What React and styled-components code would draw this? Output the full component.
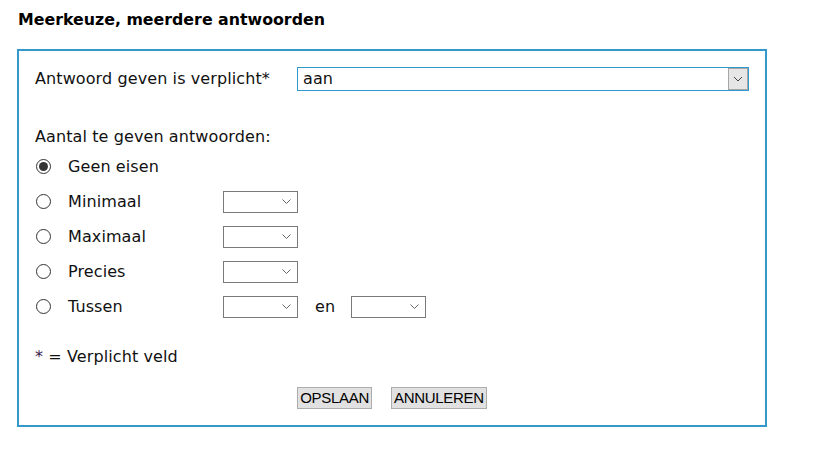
import React from "react";
import styled, { createGlobalStyle } from "styled-components";

const Global = createGlobalStyle`
  html, body { margin: 0; padding: 0; background: #fff; }
  body { font-family: "DejaVu Sans", Verdana, sans-serif; color: #111; }
`;

const Page = styled.div`
  padding: 11px 0 0 17px;
  width: 750px;
`;

const Title = styled.h2`
  margin: 0 0 0 1px;
  font-size: 15.8px;
  font-weight: bold;
  line-height: 18px;
  color: #000;
`;

const Panel = styled.div`
  margin-top: 20px;
  box-sizing: border-box;
  width: 750px;
  height: 378px;
  border: 2px solid #3399cc;
  padding: 16px 16px 0 16px;
  display: flex;
  flex-direction: column;
`;

const TopRow = styled.div`
  display: flex;
  align-items: center;
  height: 24px;
`;

const Text = styled.span`
  font-size: 16px;
  letter-spacing: 0.1px;
  line-height: 18px;
`;

const Label = styled(Text)`
  width: ${(p) => p.$w || "auto"};
  flex: none;
`;

const MainSelect = styled.div`
  box-sizing: border-box;
  width: 452px;
  height: 24px;
  border: 1px solid #3399cc;
  display: flex;
  align-items: stretch;
  background: #fff;
`;

const SelectValue = styled(Text)`
  flex: 1;
  line-height: 22px;
  padding-left: 5px;
`;

const DropBtn = styled.span`
  width: 20px;
  box-sizing: border-box;
  background: #e6e6e6;
  border: 1px solid #a6a6a6;
  display: flex;
  align-items: center;
  justify-content: center;
`;

const SubHeading = styled(Text)`
  display: block;
  margin-top: 37px;
`;

const Options = styled.div`
  margin-top: 3px;
  display: flex;
  flex-direction: column;
`;

const OptionRow = styled.div`
  display: flex;
  align-items: center;
  height: 35px;
`;

const Radio = styled.span`
  box-sizing: border-box;
  width: 15px;
  height: 15px;
  border-radius: 50%;
  border: 1px solid #333;
  margin-left: 1px;
  flex: none;
  display: flex;
  align-items: center;
  justify-content: center;
  &::after {
    content: "";
    width: 9px;
    height: 9px;
    border-radius: 50%;
    background: #333;
    display: ${(p) => (p.$checked ? "block" : "none")};
  }
`;

const OptionLabel = styled(Text)`
  margin-left: 17px;
  width: 155px;
  flex: none;
`;

const SmallSelect = styled.div`
  box-sizing: border-box;
  width: 75px;
  height: 22px;
  border: 1px solid #7a7a7a;
  display: flex;
  align-items: center;
  justify-content: flex-end;
  padding-right: 6px;
  background: #fff;
  flex: none;
`;

const En = styled(Text)`
  margin: 0 16px 0 17px;
`;

const Required = styled(Text)`
  display: block;
  margin-top: 24px;
`;

const Star = styled.span`
  color: #3a1a4a;
`;

const Buttons = styled.div`
  margin-top: 21px;
  display: flex;
  justify-content: center;
  gap: 19px;
  margin-left: -16px;
  margin-right: -16px;
`;

const Button = styled.button`
  font-family: "Liberation Sans", Arial, sans-serif;
  font-size: 15px;
  height: 22px;
  padding: 0 2px;
  background: #e1e1e1;
  border: 1px solid #adadad;
  color: #000;
  line-height: 20px;
  letter-spacing: -0.3px;
`;

const Chevron = ({ size = 10 }) => (
  <svg width={size} height={size * 0.6} viewBox="0 0 10 6">
    <path d="M1 1 L5 5 L9 1" fill="none" stroke="#444" strokeWidth="1" />
  </svg>
);

const SmallChevron = () => (
  <svg width="9" height="5" viewBox="0 0 9 5">
    <path d="M0.5 0.5 L4.5 4.5 L8.5 0.5" fill="none" stroke="#666" strokeWidth="1" />
  </svg>
);

const rows = [
  { label: "Geen eisen", checked: true, selects: 0 },
  { label: "Minimaal", selects: 1 },
  { label: "Maximaal", selects: 1 },
  { label: "Precies", selects: 1 },
  { label: "Tussen", selects: 2 },
];

export default function App() {
  return (
    <>
      <Global />
      <Page>
        <Title>Meerkeuze, meerdere antwoorden</Title>
        <Panel>
          <TopRow>
            <Label $w="262px">Antwoord geven is verplicht*</Label>
            <MainSelect>
              <SelectValue>aan</SelectValue>
              <DropBtn>
                <Chevron />
              </DropBtn>
            </MainSelect>
          </TopRow>
          <SubHeading>Aantal te geven antwoorden:</SubHeading>
          <Options>
            {rows.map((r) => (
              <OptionRow key={r.label}>
                <Radio $checked={r.checked} />
                <OptionLabel>{r.label}</OptionLabel>
                {r.selects >= 1 && (
                  <SmallSelect>
                    <SmallChevron />
                  </SmallSelect>
                )}
                {r.selects === 2 && (
                  <>
                    <En>en</En>
                    <SmallSelect>
                      <SmallChevron />
                    </SmallSelect>
                  </>
                )}
              </OptionRow>
            ))}
          </Options>
          <Required>
            <Star>*</Star> = Verplicht veld
          </Required>
          <Buttons>
            <Button>OPSLAAN</Button>
            <Button>ANNULEREN</Button>
          </Buttons>
        </Panel>
      </Page>
    </>
  );
}
